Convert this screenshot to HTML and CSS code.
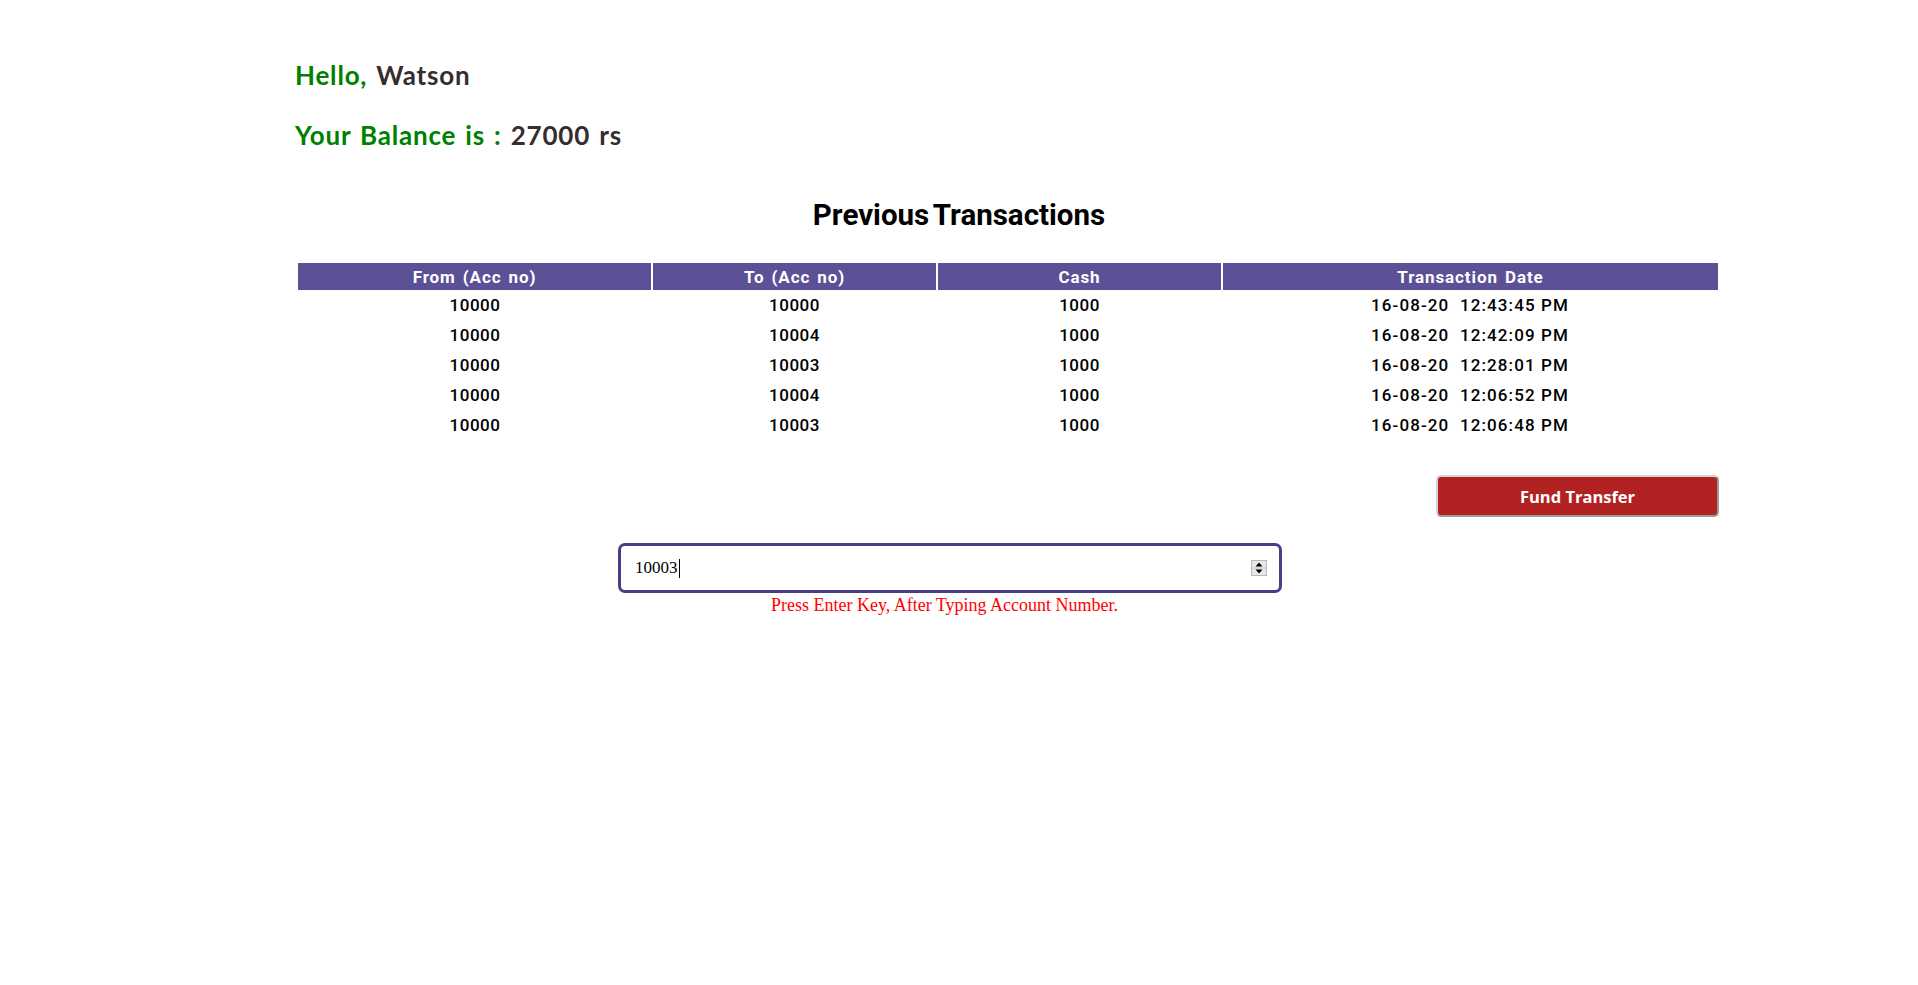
FILE: index.html
```html
<!DOCTYPE html>
<html lang="en">
<head>
<meta charset="utf-8">
<title>Dashboard</title>
<link rel="stylesheet" href="styles.css">
</head>
<body>
<div class="page">
  <section class="greeting">
    <h1 class="hello"><span class="label">Hello, </span><span class="value">Watson</span></h1>
    <h2 class="balance"><span class="label">Your Balance is : </span><span class="value">27000 rs</span></h2>
  </section>

  <h2 class="section-title">Previous Transactions</h2>

  <section class="history">
    <table class="tx-table">
      <colgroup>
        <col class="c1"><col class="c2"><col class="c3"><col class="c4">
      </colgroup>
      <thead>
        <tr><th>From (Acc no)</th><th>To (Acc no)</th><th>Cash</th><th>Transaction Date</th></tr>
      </thead>
      <tbody>
        <tr><td>10000</td><td>10000</td><td>1000</td><td class="date">16-08-20&nbsp;&nbsp;12:43:45 PM</td></tr>
        <tr><td>10000</td><td>10004</td><td>1000</td><td class="date">16-08-20&nbsp;&nbsp;12:42:09 PM</td></tr>
        <tr><td>10000</td><td>10003</td><td>1000</td><td class="date">16-08-20&nbsp;&nbsp;12:28:01 PM</td></tr>
        <tr><td>10000</td><td>10004</td><td>1000</td><td class="date">16-08-20&nbsp;&nbsp;12:06:52 PM</td></tr>
        <tr><td>10000</td><td>10003</td><td>1000</td><td class="date">16-08-20&nbsp;&nbsp;12:06:48 PM</td></tr>
      </tbody>
    </table>
    <div class="actions">
      <button class="fund-btn" type="button">Fund Transfer</button>
    </div>
  </section>

  <section class="transfer">
    <div class="acc-field">
      <span class="acc-value">10003</span><span class="caret"></span>
      <span class="grow"></span>
      <svg class="spinner" width="16" height="16" viewBox="0 0 16 16" aria-hidden="true">
        <rect x="0.5" y="0.5" width="15" height="15" fill="#e9e9e9" stroke="#b8b8b8"/>
        <line x1="1" y1="8" x2="15" y2="8" stroke="#c8c8c8"/>
        <path d="M8 2.5 L11.5 6.5 L4.5 6.5 Z" fill="#000"/>
        <path d="M8 13.5 L11.5 9.5 L4.5 9.5 Z" fill="#000"/>
      </svg>
    </div>
    <p class="hint">Press Enter Key, After Typing Account Number.</p>
  </section>
</div>
</body>
</html>
```

FILE: styles.css
```css
html, body {
  margin: 0;
  padding: 0;
  background: #ffffff;
}

body {
  font-family: Roboto, "Liberation Sans", sans-serif;
  color: #000;
}

.page {
  min-height: 985px;
}

.greeting {
  padding: 60px 0 0 295px;
}

.hello,
.balance {
  margin: 0;
  font-family: Lato, "Open Sans", sans-serif;
  font-weight: 700;
  font-size: 26px;
  line-height: 31px;
  letter-spacing: 0.8px;
  word-spacing: 2px;
}

.balance {
  margin-top: 29px;
}

.greeting .label {
  color: #008000;
}

.greeting .value {
  color: #362d2d;
}

.section-title {
  margin: 48px 0 0 0;
  text-align: center;
  font-family: Roboto, sans-serif;
  font-weight: 700;
  font-size: 29.5px;
  line-height: 33px;
  word-spacing: -3px;
  color: #000;
}

.history {
  margin: 31px 200px 0 298px;
}

.tx-table {
  width: 1420px;
  border-collapse: collapse;
  table-layout: fixed;
  font-size: 17px;
}

.tx-table .c1 { width: 354px; }
.tx-table .c2 { width: 285px; }
.tx-table .c3 { width: 285px; }
.tx-table .c4 { width: 496px; }

.tx-table th {
  height: 27px;
  padding: 0;
  background: #5c5197;
  color: #ffffff;
  font-weight: 700;
  letter-spacing: 0.9px;
  word-spacing: 2px;
  text-align: center;
  vertical-align: middle;
}

.tx-table th + th {
  border-left: 2px solid #ffffff;
}

.tx-table td {
  height: 30px;
  padding: 0;
  text-align: center;
  vertical-align: middle;
  font-weight: 500;
  letter-spacing: 0.5px;
  color: #000;
}

.tx-table td.date {
  letter-spacing: 1.1px;
}

.actions {
  display: flex;
  justify-content: flex-end;
  margin-top: 35px;
}

.fund-btn {
  width: 283px;
  height: 42px;
  margin-right: -1px;
  background: #b22222;
  color: #ffffff;
  font-family: "Open Sans", sans-serif;
  font-weight: 700;
  font-size: 16.5px;
  border: 2px solid;
  border-color: #d6d6d6 #9a9a9a #9a9a9a #d6d6d6;
  border-radius: 5px;
  cursor: pointer;
}

.transfer {
  margin: 26px 0 0 618px;
  width: 664px;
}

.acc-field {
  box-sizing: border-box;
  height: 50px;
  border: 3px solid #483d8b;
  border-radius: 7px;
  display: flex;
  align-items: center;
  padding: 0 12px 0 14px;
  font-family: "Liberation Serif", "Times New Roman", serif;
  font-size: 17px;
}

.acc-value {
  color: #000;
}

.caret {
  display: inline-block;
  width: 1px;
  height: 19px;
  background: #000;
  margin-left: 1px;
}

.grow {
  flex: 1;
}

.spinner {
  display: block;
}

.hint {
  margin: 2px 0 0 0;
  padding-right: 11px;
  text-align: center;
  font-family: "Liberation Serif", "Times New Roman", serif;
  font-size: 18px;
  color: #ff0000;
}
```
